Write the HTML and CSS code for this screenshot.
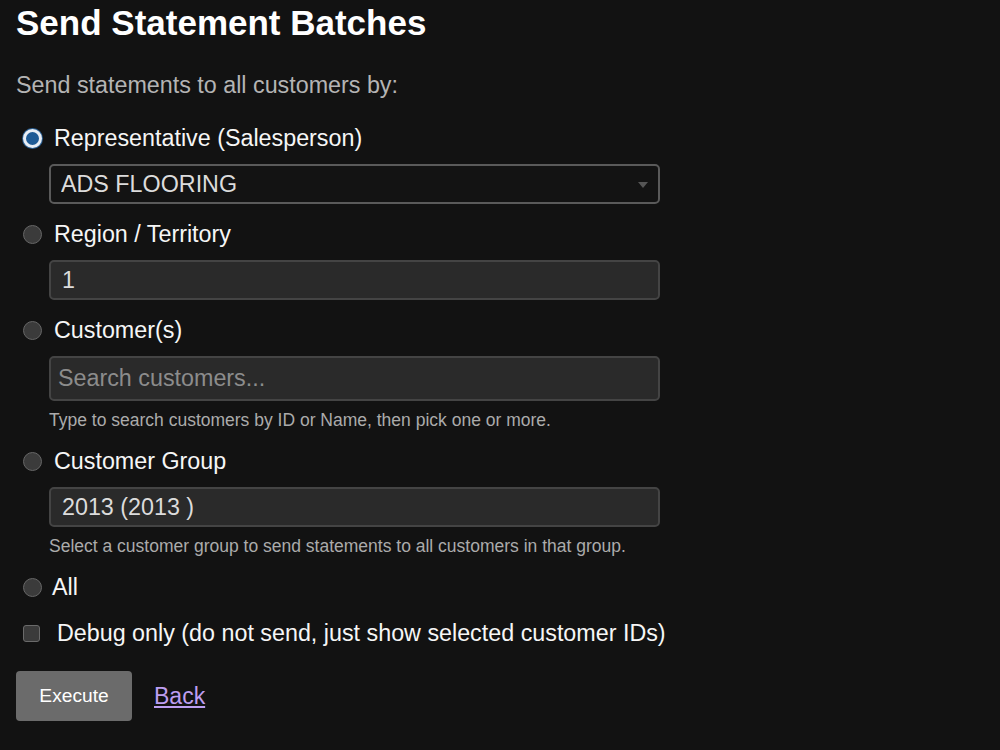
FILE: index.html
```html
<!DOCTYPE html>
<html lang="en">
<head>
  <meta charset="UTF-8">
  <title>Send Statement Batches</title>
  <link rel="stylesheet" href="styles.css">
</head>
<body>
  <div class="page">
    <h1>Send Statement Batches</h1>
    <p class="intro">Send statements to all customers by:</p>

    <form class="batch-form">
      <label class="option">
        <input type="radio" name="mode" value="rep" checked>
        <span>Representative (Salesperson)</span>
      </label>
      <div class="field select-wrap">
        <select class="select">
          <option>ADS FLOORING</option>
        </select>
      </div>

      <label class="option">
        <input type="radio" name="mode" value="region">
        <span>Region / Territory</span>
      </label>
      <div class="field">
        <input type="text" class="text-input" value="1">
      </div>

      <label class="option">
        <input type="radio" name="mode" value="customers">
        <span>Customer(s)</span>
      </label>
      <div class="field">
        <input type="text" class="text-input search" placeholder="Search customers...">
      </div>
      <div class="help">Type to search customers by ID or Name, then pick one or more.</div>

      <label class="option">
        <input type="radio" name="mode" value="group">
        <span>Customer Group</span>
      </label>
      <div class="field">
        <input type="text" class="text-input" value="2013 (2013 )">
      </div>
      <div class="help">Select a customer group to send statements to all customers in that group.</div>

      <label class="option all">
        <input type="radio" name="mode" value="all">
        <span>All</span>
      </label>

      <label class="option debug">
        <input type="checkbox" name="debug">
        <span>Debug only (do not send, just show selected customer IDs)</span>
      </label>

      <div class="actions">
        <button type="submit" class="btn">Execute</button>
        <a href="#" class="back">Back</a>
      </div>
    </form>
  </div>
</body>
</html>
```

FILE: styles.css
```css
body {
  margin: 0;
  background: #121212;
  color: #f2f2f2;
  font-family: "Liberation Sans", Arial, sans-serif;
}
.page {
  padding: 3px 16px 0;
}
h1 {
  margin: 0;
  font-size: 35px;
  line-height: 40px;
  font-weight: bold;
  color: #fff;
}
.intro {
  margin: 28px 0 25px;
  font-size: 23.3px;
  line-height: 28px;
  color: #b4b4b4;
}
.option {
  display: flex;
  align-items: center;
  height: 28px;
  margin-top: 16px;
  font-size: 23.3px;
  color: #f6f6f6;
  cursor: pointer;
}
.option input[type="radio"] {
  appearance: none;
  -webkit-appearance: none;
  box-sizing: border-box;
  width: 19px;
  height: 19px;
  margin: 0 12px 0 7px;
  border: 1px solid #666;
  border-radius: 50%;
  background: #3b3b3b;
}
.option input[type="radio"]:checked {
  border: 3px solid #e8eef5;
  background: #1e5b96;
  box-shadow: 0 0 0 1px #2a5f92;
}
.all input[type="radio"] {
  margin-right: 10px;
}
.option input[type="checkbox"] {
  appearance: none;
  -webkit-appearance: none;
  box-sizing: border-box;
  width: 17px;
  height: 17px;
  margin: 0 17px 0 7px;
  border: 1px solid #6a6a6a;
  border-radius: 3px;
  background: #3b3b3b;
}
.debug {
  margin-top: 18px;
}
.field {
  margin: 12px 0 0 33px;
  width: 611px;
}
.select-wrap {
  position: relative;
}
.select-wrap::after {
  content: "";
  position: absolute;
  right: 12px;
  top: 18px;
  border-left: 5px solid transparent;
  border-right: 5px solid transparent;
  border-top: 6px solid #555;
  pointer-events: none;
}
.select, .text-input {
  box-sizing: border-box;
  width: 100%;
  height: 40px;
  padding: 0 11px;
  border-radius: 5px;
  font-family: inherit;
  font-size: 23.3px;
  color: #dcdcdc;
  outline: none;
}
.select {
  appearance: none;
  -webkit-appearance: none;
  background: #131313;
  border: 2px solid #5a5a5a;
  padding-left: 10px;
}
.text-input {
  background: #2a2a2a;
  border: 2px solid #444;
}
.text-input.search {
  height: 45px;
  padding-left: 7px;
}
.text-input::placeholder {
  color: #8c8c8c;
}
.help {
  margin: 8px 0 0 33px;
  font-size: 17.5px;
  line-height: 22px;
  color: #ababab;
}
.actions {
  display: flex;
  align-items: center;
  gap: 22px;
  margin-top: 24px;
}
.btn {
  width: 116px;
  height: 50px;
  border: none;
  border-radius: 4px;
  background: #6b6b6b;
  color: #fff;
  font-family: inherit;
  font-size: 19.2px;
  cursor: pointer;
}
.btn:hover {
  background: #787878;
}
.back {
  font-size: 23px;
  color: #bd9ef0;
  text-decoration: underline;
}
```
